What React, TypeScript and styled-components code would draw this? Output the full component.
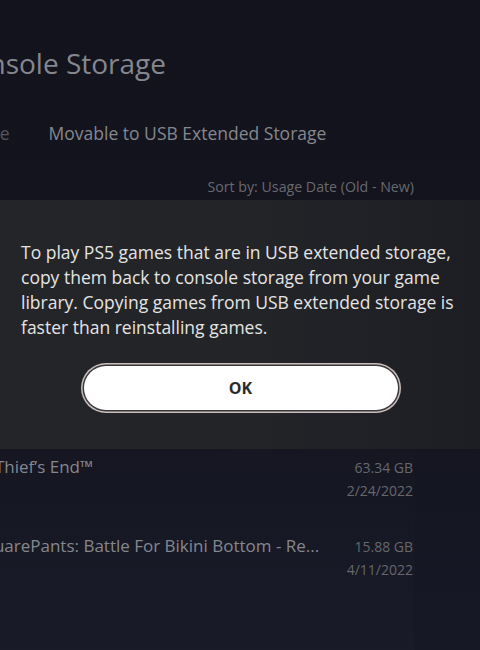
import React from "react";
import styled, { createGlobalStyle } from "styled-components";

const GlobalStyle = createGlobalStyle`
  html, body {
    margin: 0;
    padding: 0;
    background: #13141d;
  }
  * {
    box-sizing: border-box;
  }
`;

const Screen = styled.div`
  width: 480px;
  height: 650px;
  overflow: hidden;
  display: flex;
  flex-direction: column;
  font-family: "Open Sans", "Noto Sans", sans-serif;
  background: linear-gradient(180deg, #12131c 0%, #14151f 60%, #161826 100%);
`;

const Header = styled.div`
  height: 200px;
  display: flex;
  flex-direction: column;
  padding-top: 45px;
`;

const Title = styled.h1`
  margin: 0 0 0 -46px;
  font-size: 28px;
  line-height: 36px;
  font-weight: 400;
  color: #86878e;
  white-space: nowrap;
`;

const Tabs = styled.div`
  display: flex;
  gap: 39px;
  margin: 40px 0 0 -53px;
`;

const Tab = styled.span<{ $dim?: boolean }>`
  font-size: 17.5px;
  line-height: 24px;
  color: ${({ $dim }) => ($dim ? "#55565c" : "#86878e")};
  white-space: nowrap;
`;

const SortBar = styled.div`
  display: flex;
  justify-content: flex-end;
  padding-right: 66px;
  margin-top: 32px;
  font-size: 14.2px;
  line-height: 20px;
  color: #68696f;
`;

const Dialog = styled.div`
  height: 249px;
  display: flex;
  flex-direction: column;
  align-items: center;
  padding: 40px 20px 0 21px;
  background: linear-gradient(90deg, #242529 0%, #232428 55%, #1d1e23 100%);
`;

const Message = styled.p`
  margin: 0;
  align-self: stretch;
  font-size: 17.5px;
  line-height: 25px;
  color: #e4e4e4;
`;

const OkButton = styled.button`
  margin-top: 26px;
  width: 314px;
  height: 44px;
  border: none;
  border-radius: 22px;
  background: #ffffff;
  box-shadow: 0 0 0 1.5px #3a3a3e, 0 0 0 3px #c9beb9;
  font-family: inherit;
  font-size: 16px;
  font-weight: 700;
  color: #2b2b2e;
  cursor: pointer;
`;

const List = styled.div`
  flex: 1;
  width: 415px;
  display: flex;
  flex-direction: column;
  padding-top: 6px;
  background: linear-gradient(180deg, rgba(255, 255, 255, 0.004), rgba(255, 255, 255, 0.012));
`;

const Row = styled.div`
  height: 79px;
  display: flex;
  justify-content: space-between;
  padding-right: 2px;
`;

const GameName = styled.span<{ $shift: number }>`
  font-size: 17px;
  line-height: 24px;
  color: #86878e;
  white-space: nowrap;
  margin-left: ${({ $shift }) => `${$shift}px`};
`;

const Meta = styled.div`
  display: flex;
  flex-direction: column;
  align-items: flex-end;
  font-size: 14px;
  line-height: 23px;
  color: #66676d;
  padding-top: 1px;
`;

const games = [
  { name: "Uncharted 4: A Thief’s End™", shift: -127, size: "63.34 GB", date: "2/24/2022" },
  {
    name: "SpongeBob SquarePants: Battle For Bikini Bottom - Re...",
    shift: -121,
    size: "15.88 GB",
    date: "4/11/2022",
  },
];

const App = () => {
  return (
    <>
      <GlobalStyle />
      <Screen>
        <Header>
          <Title>Console Storage</Title>
          <Tabs>
            <Tab $dim>Storage</Tab>
            <Tab>Movable to USB Extended Storage</Tab>
          </Tabs>
          <SortBar>Sort by: Usage Date (Old - New)</SortBar>
        </Header>
        <Dialog>
          <Message>
            To play PS5 games that are in USB extended storage, copy them back to console storage
            from your game library. Copying games from USB extended storage is faster than
            reinstalling games.
          </Message>
          <OkButton>OK</OkButton>
        </Dialog>
        <List>
          {games.map((game) => (
            <Row key={game.name}>
              <GameName $shift={game.shift}>{game.name}</GameName>
              <Meta>
                <span>{game.size}</span>
                <span>{game.date}</span>
              </Meta>
            </Row>
          ))}
        </List>
      </Screen>
    </>
  );
};

export default App;
